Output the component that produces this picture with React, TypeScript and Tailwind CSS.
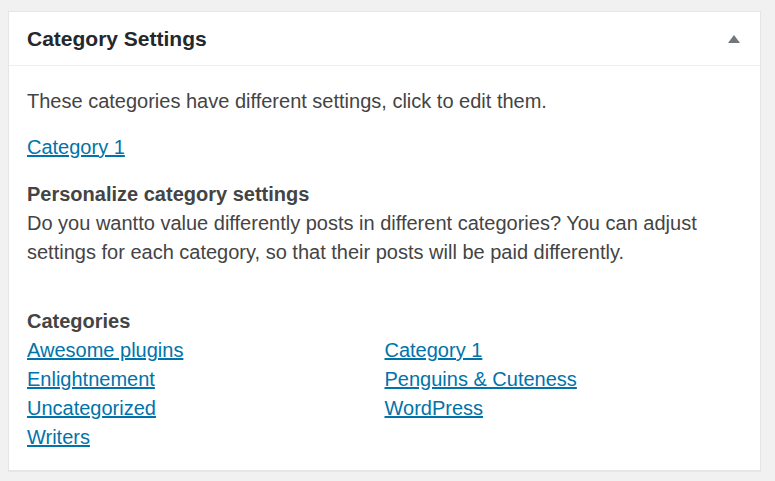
const left = ["Awesome plugins", "Enlightnement", "Uncategorized", "Writers"];
const right = ["Category 1", "Penguins & Cuteness", "WordPress"];

export default function App() {
  return (
    <div className="min-h-[481px] bg-[#f1f1f1] pt-[11px] pl-[8px] font-['Liberation_Sans',Arial,sans-serif]">
      <div className="w-[753px] border border-[#e5e5e5] bg-white shadow-[0_1px_1px_rgba(0,0,0,0.04)]">
        {/* Header */}
        <div className="flex h-[54px] items-center justify-between border-b border-[#eeeeee] pl-[18px] pr-[20px]">
          <h2 className="text-[21px] font-bold text-[#23282d]">Category Settings</h2>
          <svg width="12" height="8" viewBox="0 0 12 8" className="mt-[1px]">
            <path d="M6 0 L12 8 L0 8 Z" fill="#72777c" />
          </svg>
        </div>

        {/* Body */}
        <div className="px-[18px] pt-[21px] pb-[18px] text-[20px] leading-[29px] text-[#444]">
          <p>These categories have different settings, click to edit them.</p>
          <p className="mt-[17px]">
            <a href="#" className="text-[#0073aa] underline">Category 1</a>
          </p>
          <div className="mt-[18px]">
            <p className="font-bold">Personalize category settings</p>
            <p>
              Do you wantto value differently posts in different categories? You can adjust settings for each
              category, so that their posts will be paid differently.
            </p>
          </div>
          <div className="mt-[40px]">
            <p className="font-bold">Categories</p>
            <div className="grid grid-cols-2">
              <div className="flex flex-col items-start">
                {left.map((c) => (
                  <a key={c} href="#" className="text-[#0073aa] underline">{c}</a>
                ))}
              </div>
              <div className="flex flex-col items-start">
                {right.map((c) => (
                  <a key={c} href="#" className="text-[#0073aa] underline">{c}</a>
                ))}
              </div>
            </div>
          </div>
        </div>
      </div>
    </div>
  );
}
